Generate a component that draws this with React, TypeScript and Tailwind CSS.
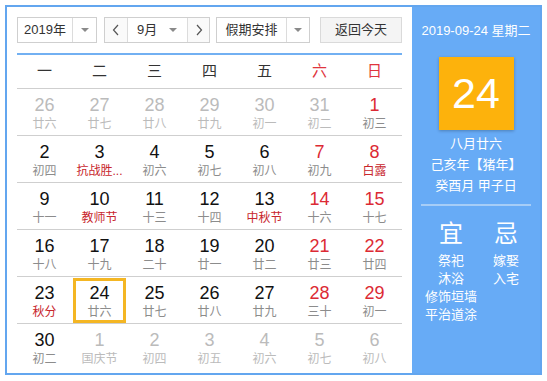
import React from 'react'

type Day = {
  n: number
  lunar: string
  other?: boolean
  redNum?: boolean
  redLunar?: boolean
  selected?: boolean
}

const weekdays = ['一', '二', '三', '四', '五', '六', '日']

const weeks: Day[][] = [
  [
    { n: 26, lunar: '廿六', other: true },
    { n: 27, lunar: '廿七', other: true },
    { n: 28, lunar: '廿八', other: true },
    { n: 29, lunar: '廿九', other: true },
    { n: 30, lunar: '初一', other: true },
    { n: 31, lunar: '初二', other: true },
    { n: 1, lunar: '初三', redNum: true },
  ],
  [
    { n: 2, lunar: '初四' },
    { n: 3, lunar: '抗战胜...', redLunar: true },
    { n: 4, lunar: '初六' },
    { n: 5, lunar: '初七' },
    { n: 6, lunar: '初八' },
    { n: 7, lunar: '初九', redNum: true },
    { n: 8, lunar: '白露', redNum: true, redLunar: true },
  ],
  [
    { n: 9, lunar: '十一' },
    { n: 10, lunar: '教师节', redLunar: true },
    { n: 11, lunar: '十三' },
    { n: 12, lunar: '十四' },
    { n: 13, lunar: '中秋节', redLunar: true },
    { n: 14, lunar: '十六', redNum: true },
    { n: 15, lunar: '十七', redNum: true },
  ],
  [
    { n: 16, lunar: '十八' },
    { n: 17, lunar: '十九' },
    { n: 18, lunar: '二十' },
    { n: 19, lunar: '廿一' },
    { n: 20, lunar: '廿二' },
    { n: 21, lunar: '廿三', redNum: true },
    { n: 22, lunar: '廿四', redNum: true },
  ],
  [
    { n: 23, lunar: '秋分', redLunar: true },
    { n: 24, lunar: '廿六', selected: true },
    { n: 25, lunar: '廿七' },
    { n: 26, lunar: '廿八' },
    { n: 27, lunar: '廿九' },
    { n: 28, lunar: '三十', redNum: true },
    { n: 29, lunar: '初一', redNum: true },
  ],
  [
    { n: 30, lunar: '初二' },
    { n: 1, lunar: '国庆节', other: true },
    { n: 2, lunar: '初四', other: true },
    { n: 3, lunar: '初五', other: true },
    { n: 4, lunar: '初六', other: true },
    { n: 5, lunar: '初七', other: true },
    { n: 6, lunar: '初八', other: true },
  ],
]

const Caret = () => (
  <span className="inline-block w-0 h-0 border-l-[4px] border-r-[4px] border-t-[4px] border-l-transparent border-r-transparent border-t-[#8a8a8a]"></span>
)

const Chevron = ({ dir }: { dir: 'left' | 'right' }) => (
  <svg width="8" height="12" viewBox="0 0 8 12" fill="none" stroke="#555" strokeWidth="1.2">
    {dir === 'left' ? <polyline points="6,1 1.5,6 6,11" /> : <polyline points="2,1 6.5,6 2,11" />}
  </svg>
)

const DayCell = ({ d }: { d: Day }) => {
  let numColor = 'text-[#111]'
  if (d.other) numColor = 'text-[#bbbbbb]'
  else if (d.redNum) numColor = 'text-[#dc2a34]'
  let lunarColor = 'text-[#8c8c8c]'
  if (d.other) lunarColor = 'text-[#bbbbbb]'
  else if (d.redLunar) lunarColor = 'text-[#c8262c]'

  return (
    <div className="h-[46px] px-[1px] pt-[1px]">
      <div
        className={`h-full flex flex-col items-center ${
          d.selected ? 'border-[3px] border-[#f4b623] pt-[2px]' : 'pt-[5px]'
        }`}
      >
        <span className={`text-[18px] leading-[20px] font-['Liberation_Sans',sans-serif] ${numColor}`}>{d.n}</span>
        <span className={`mt-[1px] text-[12px] leading-[16px] whitespace-nowrap ${lunarColor}`}>{d.lunar}</span>
      </div>
    </div>
  )
}

export default function App() {
  return (
    <div className="w-[547px] h-[381px] bg-white pt-[5px] pl-[5px] font-['Liberation_Sans','Noto_Sans_CJK_SC',sans-serif]">
      <div className="w-[537px] h-[370px] border-2 border-[#63a6ef] flex">
        {/* Left: calendar */}
        <div className="flex-1 px-[10px] pt-[10px] bg-white">
          <div className="flex items-center h-[26px] text-[13px] text-[#333]">
            <div className="flex h-full w-[80px] border border-[#cfcfcf]">
              <div className="w-[55px] flex items-center justify-center border-r border-[#dcdcdc]">2019年</div>
              <div className="flex-1 flex items-center justify-center">
                <Caret />
              </div>
            </div>
            <div className="flex h-full w-[106px] ml-[7px] border border-[#cfcfcf]">
              <div className="w-[23px] flex items-center justify-center border-r border-[#dcdcdc] bg-[#fafafa]">
                <Chevron dir="left" />
              </div>
              <div className="w-[60px] flex items-center pl-[9px] border-r border-[#dcdcdc]">
                <span>9月</span>
                <span className="ml-auto mr-[10px] flex">
                  <Caret />
                </span>
              </div>
              <div className="flex-1 flex items-center justify-center bg-[#fafafa]">
                <Chevron dir="right" />
              </div>
            </div>
            <div className="flex h-full w-[94px] ml-[6px] border border-[#cfcfcf]">
              <div className="w-[70px] flex items-center justify-center border-r border-[#dcdcdc]">假期安排</div>
              <div className="flex-1 flex items-center justify-center">
                <Caret />
              </div>
            </div>
            <button className="ml-auto h-full w-[82px] border border-[#dadada] bg-[#f4f4f4] text-[13px] text-[#333]">
              返回今天
            </button>
          </div>

          <div className="mt-[10px] border-t-2 border-[#72b0f2]">
            <div className="grid grid-cols-7 h-[34px] border-b border-[#cfcfcf] text-[15px]">
              {weekdays.map((w, i) => (
                <div
                  key={w}
                  className={`flex items-center justify-center ${i >= 5 ? 'text-[#e0353d]' : 'text-[#333]'}`}
                >
                  {w}
                </div>
              ))}
            </div>
            {weeks.map((week, wi) => (
              <div
                key={wi}
                className={`grid grid-cols-7 ${wi < weeks.length - 1 ? 'border-b border-[#cfcfcf]' : ''}`}
              >
                {week.map((d, di) => (
                  <DayCell key={di} d={d} />
                ))}
              </div>
            ))}
          </div>
        </div>

        {/* Right: today panel */}
        <div className="w-[128px] bg-[#67abf6] text-white flex flex-col items-center">
          <div className="mt-[14px] text-[13px] leading-[20px] whitespace-nowrap">2019-09-24 星期二</div>
          <div className="mt-[16px] w-[75px] h-[73px] bg-[#fdb20c] shadow-[0_1px_3px_rgba(0,0,0,0.25)] flex items-center justify-center">
            <span className="text-[43px] leading-none font-['Liberation_Sans',sans-serif]">24</span>
          </div>
          <div className="mt-[3px] text-[13px] leading-[21px] text-center">
            <div>八月廿六</div>
            <div>己亥年【猪年】</div>
            <div>癸酉月 甲子日</div>
          </div>
          <div className="mt-[8px] w-[110px] h-[2px] bg-[#a6cdf7]"></div>
          <div className="mt-[13px] flex w-full pl-[13px] gap-[3px]">
            <div className="w-[52px] flex flex-col items-center">
              <div className="text-[24px] leading-[30px]">宜</div>
              <div className="mt-[3px] text-[13px] leading-[18px] text-center whitespace-nowrap">
                <div>祭祀</div>
                <div>沐浴</div>
                <div>修饰垣墙</div>
                <div>平治道涂</div>
              </div>
            </div>
            <div className="w-[52px] flex flex-col items-center">
              <div className="text-[24px] leading-[30px]">忌</div>
              <div className="mt-[3px] text-[13px] leading-[18px] text-center whitespace-nowrap">
                <div>嫁娶</div>
                <div>入宅</div>
              </div>
            </div>
          </div>
        </div>
      </div>
    </div>
  )
}
